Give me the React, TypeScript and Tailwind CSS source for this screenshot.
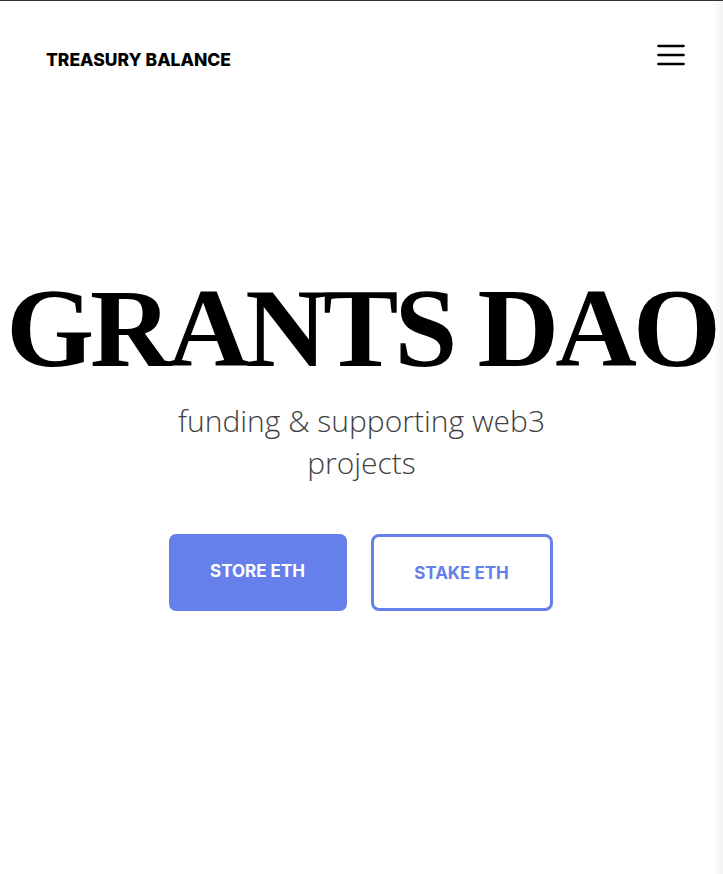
import React from 'react';

function MenuIcon() {
  return (
    <svg width="28" height="22" viewBox="0 0 28 22" fill="none" aria-hidden="true">
      <path d="M1.5 2h25M1.5 11h25M1.5 20h25" stroke="#000" strokeWidth="2.6" strokeLinecap="round" />
    </svg>
  );
}

export default function App() {
  return (
    <div className="min-h-[874px] border-t border-[#333] bg-[linear-gradient(to_right,#fff_713px,#f3f3f3)]">
      <header className="flex items-start justify-between pl-[46px] pr-[38px] pt-[43px]">
        <span className="mt-[7px] font-['Inter'] text-[17.5px] font-extrabold leading-none text-black">
          TREASURY BALANCE
        </span>
        <button type="button" aria-label="menu" className="text-black">
          <MenuIcon />
        </button>
      </header>

      <main className="flex flex-col items-center pt-[202px]">
        <h1 className="whitespace-nowrap font-['Liberation_Serif',serif] text-[113px] font-bold leading-none tracking-[-0.035em] text-black">
          GRANTS DAO
        </h1>
        <p className="mt-[16px] w-[420px] text-center font-['Open_Sans',sans-serif] text-[30px] font-light leading-[42px] text-[#404040]">
          funding &amp; supporting web3 projects
        </p>
        <div className="mt-[50px] flex gap-[24px] pr-[2px]">
          <button
            type="button"
            className="h-[77px] w-[178px] rounded-[7px] bg-[#6580ea] pb-[1px] font-['Inter'] text-[17px] font-bold text-white"
          >
            STORE ETH
          </button>
          <button
            type="button"
            className="h-[77px] w-[182px] rounded-[8px] border-[3px] border-[#6580ea] bg-white pt-[4px] font-['Inter'] text-[17px] font-bold text-[#6580ea]"
          >
            STAKE ETH
          </button>
        </div>
      </main>
    </div>
  );
}
